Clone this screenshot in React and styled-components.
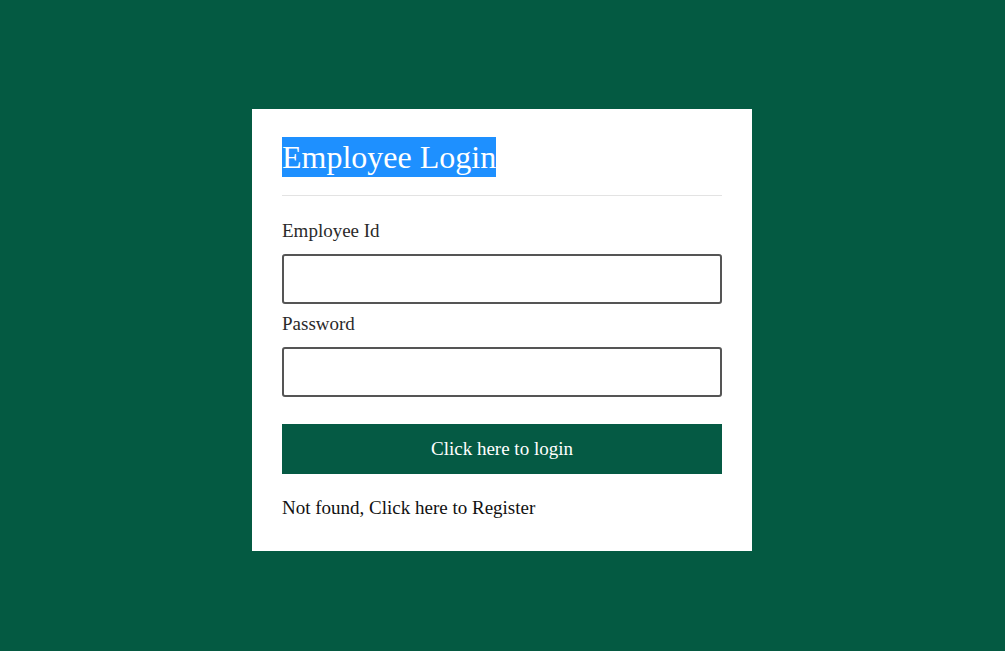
import React from "react";
import styled, { createGlobalStyle } from "styled-components";

const GlobalStyle = createGlobalStyle`
  html, body {
    margin: 0;
    padding: 0;
    background: #045a42;
    font-family: "Liberation Serif", "Times New Roman", serif;
  }
  * { box-sizing: border-box; }
`;

const Page = styled.div`
  min-height: 100vh;
  display: flex;
  justify-content: center;
  align-items: flex-start;
  padding: 109px 1px 0 0;
`;

const Card = styled.form`
  width: 500px;
  background: #ffffff;
  padding: 28px 30px 31px;
  display: flex;
  flex-direction: column;
`;

const Title = styled.h1`
  margin: 0;
  font-size: 32px;
  font-weight: 400;
  line-height: 40px;
  height: 40px;
`;

const Highlight = styled.span`
  display: inline-block;
  background: #1e90ff;
  color: #ffffff;
  line-height: 40px;
`;

const Divider = styled.hr`
  border: none;
  height: 1px;
  background: #e3e3e3;
  margin: 18px 0 23px;
`;

const Label = styled.label`
  display: block;
  font-size: 19px;
  line-height: 24px;
  color: #2a2a2a;
  margin-bottom: 11px;
`;

const Input = styled.input`
  display: block;
  width: 100%;
  height: 50px;
  border: 2px solid #555555;
  border-radius: 3px;
  background: #fff;
  font-family: inherit;
  font-size: 18px;
  padding: 0 10px;
  margin: 0 0 ${(p) => p.$after}px;
  outline: none;
`;

const Button = styled.button`
  height: 50px;
  width: 100%;
  border: none;
  background: #055a44;
  color: #ffffff;
  font-family: inherit;
  font-size: 19px;
  cursor: pointer;
`;

const RegisterLink = styled.a`
  display: block;
  margin-top: 22px;
  font-size: 19px;
  line-height: 24px;
  color: #111;
  text-decoration: none;
  cursor: pointer;
`;

export default function App() {
  return (
    <>
      <GlobalStyle />
      <Page>
        <Card onSubmit={(e) => e.preventDefault()}>
          <Title>
            <Highlight>Employee Login</Highlight>
          </Title>
          <Divider />
          <Label htmlFor="empid">Employee Id</Label>
          <Input id="empid" type="text" $after={8} />
          <Label htmlFor="pwd">Password</Label>
          <Input id="pwd" type="password" $after={27} />
          <Button type="submit">Click here to login</Button>
          <RegisterLink>Not found, Click here to Register</RegisterLink>
        </Card>
      </Page>
    </>
  );
}
